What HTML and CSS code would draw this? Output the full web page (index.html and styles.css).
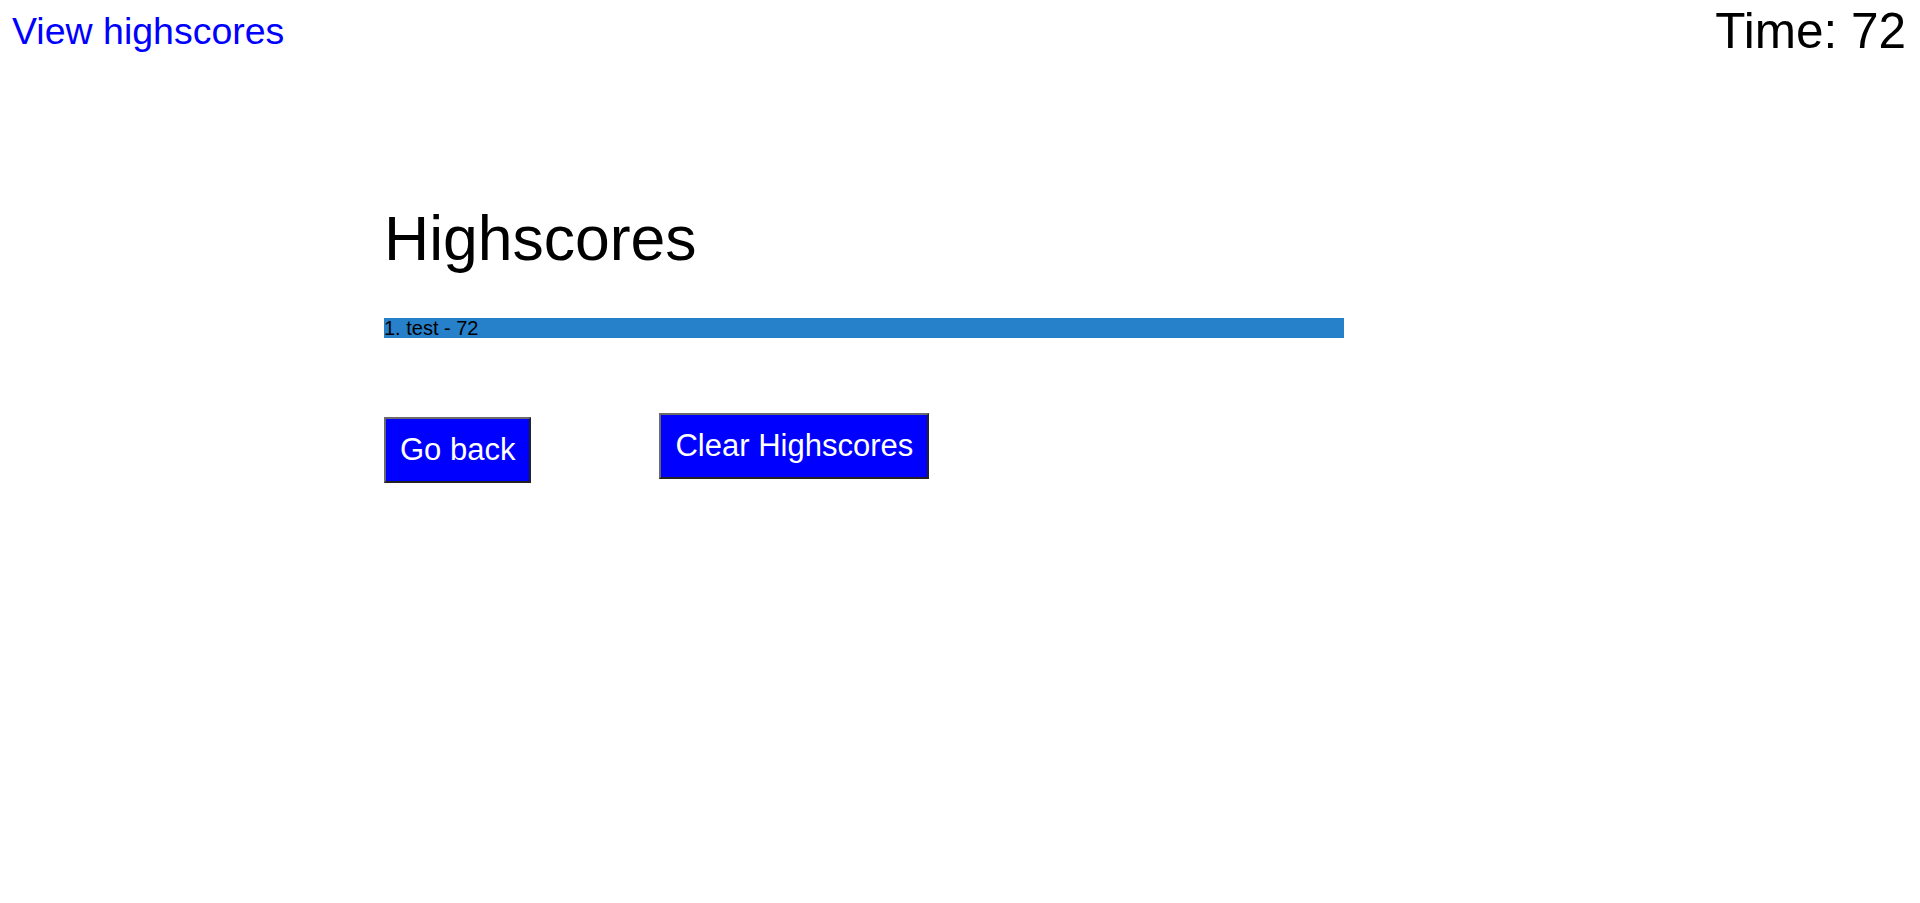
FILE: index.html
```html
<!DOCTYPE html>
<html lang="en">
<head>
<meta charset="utf-8">
<title>Highscores</title>
<link rel="stylesheet" href="styles.css">
</head>
<body>
<header class="top-bar">
  <a class="view-link" href="#">View highscores</a>
  <div class="timer">Time: 72</div>
</header>
<main class="scores">
  <h1 class="scores-title">Highscores</h1>
  <ol class="score-list">
    <li class="score-item">1. test - 72</li>
  </ol>
  <div class="actions">
    <button class="btn btn-back" type="button">Go back</button>
    <button class="btn btn-clear" type="button">Clear Highscores</button>
  </div>
</main>
</body>
</html>
```

FILE: styles.css
```css
html, body {
  margin: 0;
  padding: 0;
  background: #ffffff;
}

body {
  font-family: "Liberation Sans", Arial, sans-serif;
  color: #000000;
}

.top-bar {
  display: flex;
  justify-content: space-between;
  align-items: flex-start;
  height: 60px;
}

.view-link {
  font-size: 37.5px;
  color: #0000ff;
  text-decoration: none;
  padding: 10px 0 0 12px;
}

.timer {
  font-size: 49.5px;
  padding: 2px 14px 0 0;
}

.scores {
  margin-left: 20%;
  width: 50%;
  padding-top: 142px;
}

.scores-title {
  font-size: 62.5px;
  font-weight: normal;
  margin: 0 0 44px 0;
}

.score-list {
  list-style: none;
  margin: 0;
  padding: 0;
}

.score-item {
  background: #2680ca;
  font-size: 20px;
  line-height: 20px;
  height: 20px;
}

.actions {
  display: flex;
  align-items: flex-start;
  margin-top: 75px;
}

.btn {
  font-family: "Liberation Sans", Arial, sans-serif;
  font-size: 31px;
  line-height: normal;
  color: #ffffff;
  background: #0000ff;
  padding: 13px 14px;
  border-style: solid;
  border-width: 2px;
  border-color: #6b6b6b #222222 #222222 #6b6b6b;
  margin: 0;
}

.btn-back {
  margin-top: 4px;
}

.btn-clear {
  margin-left: 128px;
}
```
